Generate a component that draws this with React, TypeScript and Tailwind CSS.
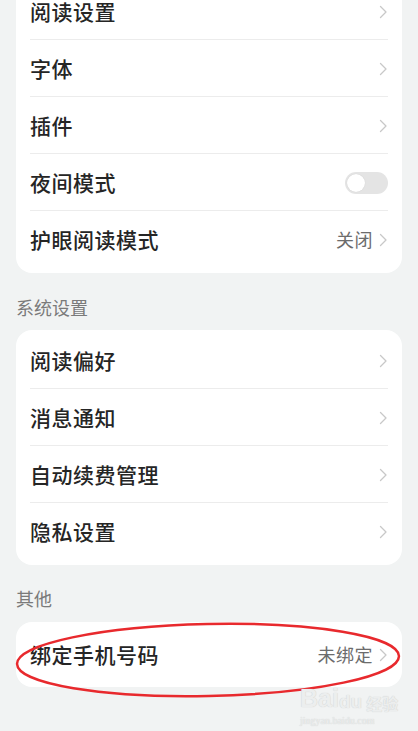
import { ReactNode } from "react";

type Row = {
  label: string;
  value?: string;
  toggle?: boolean;
};

const readingRows: Row[] = [
  { label: "阅读设置" },
  { label: "字体" },
  { label: "插件" },
  { label: "夜间模式", toggle: true },
  { label: "护眼阅读模式", value: "关闭" },
];

const systemRows: Row[] = [
  { label: "阅读偏好" },
  { label: "消息通知" },
  { label: "自动续费管理" },
  { label: "隐私设置" },
];

function Chevron() {
  return (
    <svg width="9" height="14" viewBox="0 0 9 14" fill="none" className="ml-[6px]">
      <path d="M1.5 1.5 L7 7 L1.5 12.5" stroke="#c8c8c8" strokeWidth="1.3" strokeLinecap="round" strokeLinejoin="round" />
    </svg>
  );
}

function Toggle() {
  return (
    <div className="w-[43px] h-[22px] rounded-full bg-[#e4e4e4] flex items-center px-[2px]">
      <div className="w-[18px] h-[18px] rounded-full bg-white shadow-[0_0_1px_rgba(0,0,0,0.15)]" />
    </div>
  );
}

function SettingRow({ row, last }: { row: Row; last: boolean }) {
  return (
    <div className="h-[57px] flex items-center relative">
      <span className="text-[21px] font-medium text-[#252525] tracking-[0.5px]">{row.label}</span>
      <div className="ml-auto flex items-center">
        {row.toggle ? (
          <Toggle />
        ) : (
          <>
            {row.value && <span className="text-[18px] text-[#6c6c6c] tracking-[0.5px]">{row.value}</span>}
            <Chevron />
          </>
        )}
      </div>
      {!last && <div className="absolute left-0 right-0 bottom-0 h-px bg-[#ececec]" />}
    </div>
  );
}

function Card({ rows, children }: { rows: Row[]; children?: ReactNode }) {
  return (
    <div className="bg-white rounded-[16px] pl-[14px] pr-[14px] pt-[2px] pb-[5px] relative">
      {rows.map((r, i) => (
        <SettingRow key={r.label} row={r} last={i === rows.length - 1} />
      ))}
      {children}
    </div>
  );
}

export default function App() {
  return (
    <div
      className="w-[418px] h-[731px] overflow-hidden bg-[#f1f3f3] relative"
      style={{ fontFamily: '"Noto Sans CJK SC", "Noto Sans", sans-serif' }}
    >
      <div className="px-4 -mt-[19px]">
        <Card rows={readingRows} />
        <div className="text-[18px] text-[#7a7a7a] pt-[20px] pb-[9px] leading-[28px]">系统设置</div>
        <Card rows={systemRows} />
        <div className="text-[18px] text-[#7a7a7a] pt-[19px] pb-[10px] leading-[28px]">其他</div>
        <div className="bg-white rounded-[16px] px-[14px] pt-[4px] pb-[4px]">
          <SettingRow row={{ label: "绑定手机号码", value: "未绑定" }} last />
        </div>
      </div>

      {/* red marker annotation */}
      <svg className="absolute left-0 top-[617px]" width="418" height="90" viewBox="0 0 418 90">
        <ellipse cx="208" cy="43" rx="191" ry="36" fill="none" stroke="#e8292d" strokeWidth="2.5" transform="rotate(-1.2 208 43)" />
      </svg>

      {/* watermark */}
      <div className="absolute left-[300px] top-[686px] leading-none" style={{ fontFamily: '"Liberation Sans", "Noto Sans CJK SC", sans-serif' }}>
        <div className="flex items-end text-[25px] font-bold text-[#eceeee] [text-shadow:0_0_1px_#c4c4c4]">
          <span>Bai</span>
          <span className="text-[19px]">du</span>
          <span className="text-[16px] ml-1" style={{ fontFamily: '"Noto Sans CJK SC", sans-serif' }}>经验</span>
        </div>
        <div className="text-[10px] text-[#eceeee] mt-[5px] [text-shadow:0_0_1px_#c4c4c4]" style={{ fontFamily: '"Liberation Serif", serif' }}>
          jingyan.baidu.com
        </div>
      </div>
    </div>
  );
}
